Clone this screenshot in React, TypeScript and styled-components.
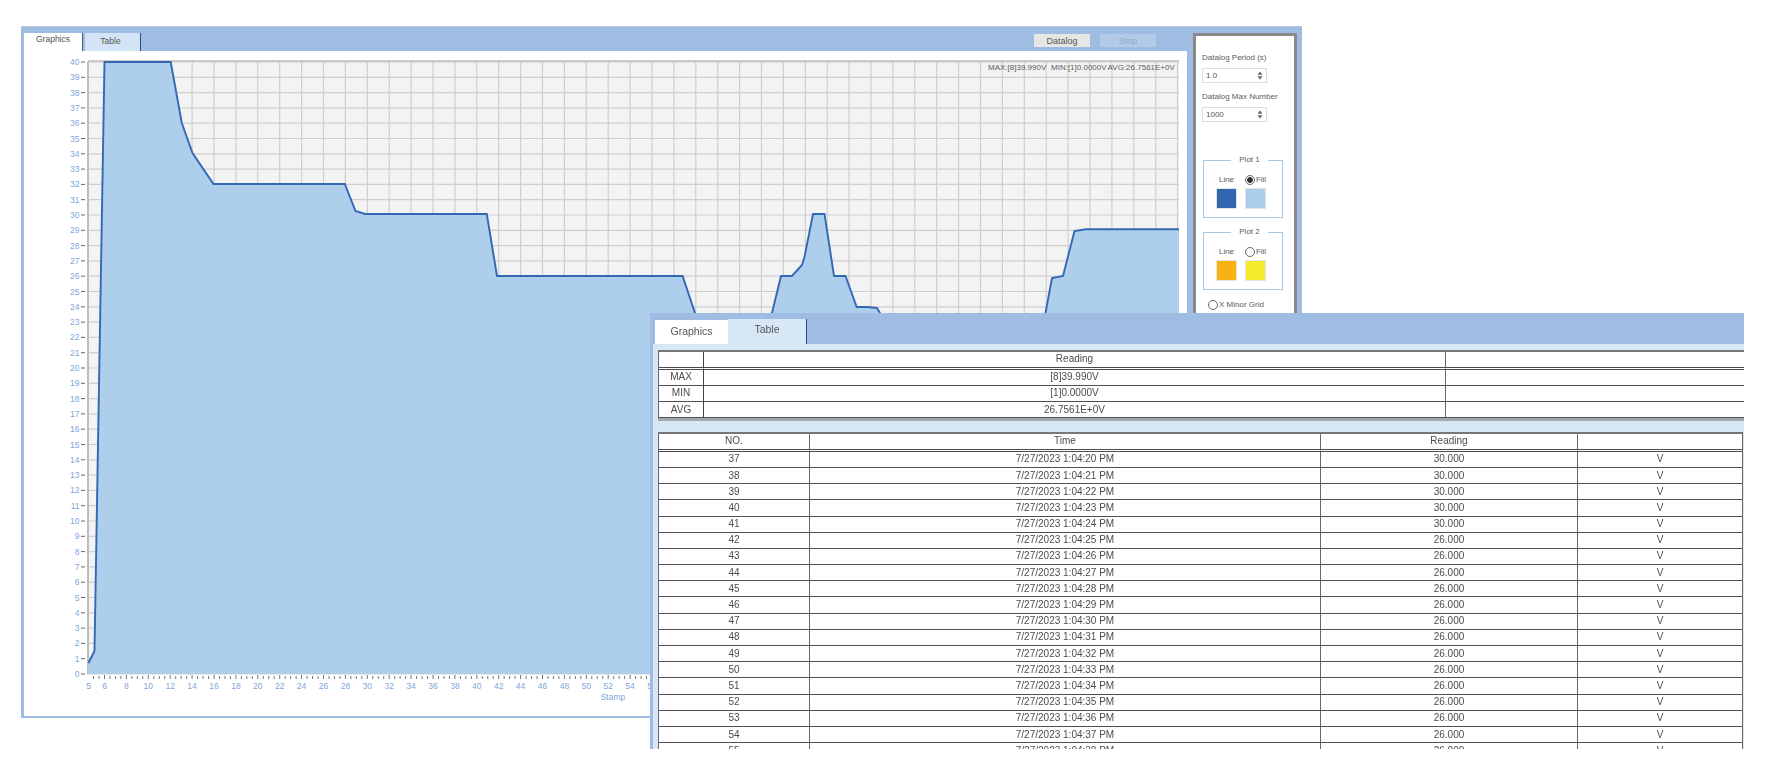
import styled, { createGlobalStyle } from 'styled-components'

const GlobalStyle = createGlobalStyle`
  html, body {
    margin: 0;
    background: #fff;
    overflow: hidden;
  }
  * {
    box-sizing: border-box;
  }
`

const Page = styled.div`
  position: relative;
  width: 1775px;
  height: 768px;
  padding: 26px 0 0 21px;
  font-family: 'Liberation Sans', Arial, sans-serif;
  filter: blur(0.55px);
`

const BackWindow = styled.div`
  width: 1281px;
  height: 692px;
  padding: 0 5px 2px 3px;
  background: #9fbce2;
  border-top: 1px solid #b9c6d6;
  display: flex;
  gap: 6px;
`

const ChartColumn = styled.div`
  width: 1163px;
  display: flex;
  flex-direction: column;
`

const TabBar = styled.div`
  height: 24px;
  padding: 6px 31px 0 0;
  display: flex;
  align-items: flex-end;
`

const Tab = styled.div<{ $active?: boolean }>`
  width: ${props => (props.$active ? '59px' : '56px')};
  height: 18px;
  margin-right: 2px;
  padding-bottom: ${props => (props.$active ? '6px' : '3px')};
  padding-right: ${props => (props.$active ? '0' : '4px')};
  display: flex;
  align-items: center;
  justify-content: center;
  font-size: 8.5px;
  color: #555;
  background: ${props => (props.$active ? '#fff' : '#d3e4f6')};
  border-right: 1px solid ${props => (props.$active ? '#4a5a78' : '#2f4a80')};
`

const ToolButton = styled.div<{ $disabled?: boolean }>`
  width: 56px;
  height: 13px;
  margin: 0 0 4px 10px;
  display: flex;
  align-items: center;
  justify-content: center;
  font-size: 9px;
  color: ${props => (props.$disabled ? '#8ea6c6' : '#555')};
  background: ${props => (props.$disabled ? '#b3cbe9' : '#e6e6e6')};
`

const Spacer = styled.div`
  flex: 1;
`

const ChartPanel = styled.div`
  flex: 1;
  background: #fff;
`

const ChartSvg = styled.svg`
  display: block;
  font-family: 'Liberation Sans', Arial, sans-serif;
`

const SidePanel = styled.div`
  width: 104px;
  height: 640px;
  margin-top: 6px;
  padding: 17px 0 0 6px;
  background: #fff;
  border: 3px solid #8b8b8b;
  border-bottom: 0;
  color: #5c5c5c;
  font-size: 8px;
`

const FieldLabel = styled.div`
  height: 10px;
  line-height: 10px;
  margin-bottom: 5px;
  white-space: nowrap;
`

const SpinBox = styled.div`
  width: 65px;
  height: 15px;
  margin-bottom: 9px;
  padding: 0 3px;
  display: flex;
  align-items: center;
  justify-content: space-between;
  border: 1px solid #dcdcdc;
  color: #555;
`

const SpinGap = styled.div`
  height: 25px;
`

const PlotGroup = styled.fieldset`
  width: 80px;
  height: 62px;
  margin: 0 0 10px 1px;
  padding: 0 0 0 13px;
  border: 1px solid #a8c6e8;
  display: block;
`

const PlotLegend = styled.legend`
  margin: 0 auto;
  padding: 0 8px;
  font-size: 8px;
  line-height: 8px;
  color: #5c5c5c;
`

const PlotGrid = styled.div`
  display: grid;
  grid-template-columns: 19px 19px;
  column-gap: 10px;
  row-gap: 4px;
  margin-top: 11px;
  justify-items: center;
`

const Option = styled.div<{ $grid?: boolean }>`
  display: flex;
  align-items: center;
  gap: 1px;
  line-height: 10px;
  margin: ${props => (props.$grid ? '5px 0 0 6px' : '0')};
  white-space: nowrap;
`

const Radio = styled.span<{ $checked?: boolean }>`
  width: 10px;
  height: 10px;
  flex: none;
  border-radius: 50%;
  border: 1px solid #666;
  background: ${props => (props.$checked ? 'radial-gradient(circle, #333 0 2.6px, #fff 3.2px)' : '#fff')};
`

const Swatch = styled.div<{ $color: string }>`
  width: 19px;
  height: 19px;
  background: ${props => props.$color};
  outline: 1px solid #e4e4e4;
`

const FrontWindow = styled.div`
  position: absolute;
  left: 650px;
  top: 313px;
  width: 1094px;
  height: 436px;
  overflow: hidden;
  background: #d8e7f6;
  border-left: 3px solid #9fbce2;
`

const FrontTabBar = styled.div`
  height: 31px;
  padding-left: 2px;
  display: flex;
  align-items: flex-end;
  background: #9fbce2;
`

const FrontTab = styled.div<{ $active?: boolean }>`
  width: ${props => (props.$active ? '79px' : '73px')};
  height: ${props => (props.$active ? '25px' : '24px')};
  padding-bottom: ${props => (props.$active ? '5px' : '2px')};
  display: flex;
  align-items: center;
  justify-content: center;
  font-size: 10.5px;
  color: #555;
  background: ${props => (props.$active ? '#d8e7f6' : '#fff')};
  border-right: ${props => (props.$active ? '1px solid #2f4a80' : '0')};
`

const TableBlock = styled.table<{ $shadow?: boolean }>`
  width: ${props => (props.$shadow ? '1088px' : '1085px')};
  margin: ${props => (props.$shadow ? '6px 0 14px 5px' : '0 0 0 5px')};
  table-layout: fixed;
  border-collapse: separate;
  border-spacing: 0;
  background: #fff;
  font-size: 10px;
  color: #4c4c4c;
  border-top: 2px solid #777;
  border-left: 1px solid #666;
  ${props => (props.$shadow ? 'box-shadow: 0 3px 0 #a5a9ae;' : 'border-right: 1px solid #666;')}
`

const Cell = styled.td<{ $head?: boolean; $wide?: boolean }>`
  height: ${props => (props.$head ? '17.6px' : '16.2px')};
  padding: 0;
  text-align: center;
  line-height: 12px;
  border-bottom: ${props => (props.$head ? '3px double #4c4c4c' : '1.5px solid #505050')};
  border-right: ${props => (props.$wide ? '1.5px solid #444' : '1px solid #666')};
  &:last-child {
    border-right: 0;
  }
`

const SpinArrows = () => (
  <svg width="6" height="9" viewBox="0 0 6 9">
    <path d="M3 0.5 L5.5 3.8 H0.5 Z M3 8.5 L5.5 5.2 H0.5 Z" fill="#666" />
  </svg>
)

// page coordinates of the trace, the part behind the table window is only a guess
const trace: [number, number][] = [
  [88.5, 663], [94.5, 651], [104.5, 62], [170.7, 62], [181.8, 123], [192.5, 153], [213.5, 184],
  [344.8, 184], [355.5, 211], [365, 214], [486.8, 214], [497, 276], [682.6, 276], [695, 313],
  [712, 340], [760, 340], [772, 313], [781, 276], [792, 276], [802, 265], [804.5, 257], [813, 214],
  [824.5, 214], [834, 276], [845.5, 276], [856.7, 307], [867, 307], [877, 308], [880, 313], [900, 340],
  [1030, 340], [1045.5, 313], [1052, 278], [1063, 276], [1074.5, 231], [1085.7, 229.3], [1179, 229.3],
]

const PLOT_LEFT = 88
const PLOT_RIGHT = 1179
const PLOT_TOP = 62
const PLOT_BOTTOM = 674
const stampX = (v: number) => 104.5 + (v - 6) * 10.95
const levelY = (v: number) => PLOT_BOTTOM - v * 15.3

const Chart = () => {
  const levels = Array.from({ length: 41 }, (_, i) => i)
  const stamps = Array.from({ length: 50 }, (_, i) => 6 + i * 2).filter(v => stampX(v) < PLOT_RIGHT)
  const minor = Array.from({ length: 120 }, (_, i) => 5 + i * 0.5).filter(v => stampX(v) < 650)
  const line = trace.map(p => p.join(',')).join(' ')
  const area = `${PLOT_LEFT},${PLOT_BOTTOM} ${line} ${PLOT_RIGHT},${PLOT_BOTTOM}`

  return (
    <ChartSvg width="1163" height="665" viewBox="24 51 1163 665">
      <rect x={PLOT_LEFT} y={PLOT_TOP} width={PLOT_RIGHT - PLOT_LEFT} height={PLOT_BOTTOM - PLOT_TOP} fill="#f3f3f3" />
      {levels.map(v => (
        <g key={v}>
          <line x1={PLOT_LEFT} x2={PLOT_RIGHT} y1={levelY(v)} y2={levelY(v)} stroke="#cfcfcf" strokeWidth="1.2" />
          <line x1="81" x2="85" y1={levelY(v)} y2={levelY(v)} stroke="#666" strokeWidth="1" />
          <text x="79.5" y={levelY(v) + 3} fontSize="8.5" textAnchor="end" fill="#7fa6da">{v}</text>
        </g>
      ))}
      {stamps.map(v => (
        <line key={v} x1={stampX(v)} x2={stampX(v)} y1={PLOT_TOP} y2={PLOT_BOTTOM} stroke="#cfcfcf" strokeWidth="1.2" />
      ))}
      <line x1={PLOT_LEFT} x2={PLOT_LEFT} y1={PLOT_TOP} y2={PLOT_BOTTOM} stroke="#bcbcbc" strokeWidth="2" />
      <line x1={PLOT_LEFT} x2={PLOT_RIGHT} y1={PLOT_TOP - 1} y2={PLOT_TOP - 1} stroke="#bcbcbc" strokeWidth="1.5" />
      <polygon points={area} fill="#aecfeb" />
      <polyline points={line} fill="none" stroke="#3368b4" strokeWidth="1.9" />
      {minor.map(v => (
        <line key={v} x1={stampX(v)} x2={stampX(v)} y1={v % 2 === 0 ? 675 : 676} y2="679" stroke="#666" strokeWidth="0.9" />
      ))}
      <text x="88.5" y="689" fontSize="8.5" textAnchor="middle" fill="#7fa6da">5</text>
      {stamps.filter(v => stampX(v) < 660).map(v => (
        <text key={v} x={stampX(v)} y="689" fontSize="8.5" textAnchor="middle" fill="#7fa6da">{v}</text>
      ))}
      <text x="613" y="700" fontSize="8.5" textAnchor="middle" fill="#7fa6da">Stamp</text>
      <text y="70" fontSize="8" fill="#5c5c5c">
        <tspan x="988">MAX:[8]39.990V</tspan>
        <tspan x="1051">MIN:[1]0.0000V</tspan>
        <tspan x="1107.6">AVG:26.7561E+0V</tspan>
      </text>
    </ChartSvg>
  )
}

const summary = [
  ['MAX', '[8]39.990V'],
  ['MIN', '[1]0.0000V'],
  ['AVG', '26.7561E+0V'],
]

const rows = Array.from({ length: 19 }, (_, i) => ({
  no: 37 + i,
  time: `7/27/2023 1:04:${20 + i} PM`,
  reading: i < 5 ? '30.000' : '26.000',
}))

export default function App() {
  return (
    <Page>
      <GlobalStyle />
      <BackWindow>
        <ChartColumn>
          <TabBar>
            <Tab $active>Graphics</Tab>
            <Tab>Table</Tab>
            <Spacer />
            <ToolButton>Datalog</ToolButton>
            <ToolButton $disabled>Stop</ToolButton>
          </TabBar>
          <ChartPanel>
            <Chart />
          </ChartPanel>
        </ChartColumn>
        <SidePanel>
          <FieldLabel>Datalog Period (s)</FieldLabel>
          <SpinBox>1.0<SpinArrows /></SpinBox>
          <FieldLabel>Datalog Max Number</FieldLabel>
          <SpinBox>1000<SpinArrows /></SpinBox>
          <SpinGap />
          <PlotGroup>
            <PlotLegend>Plot 1</PlotLegend>
            <PlotGrid>
              <Option>Line</Option>
              <Option><Radio $checked />Fill</Option>
              <Swatch $color="#3366b0" />
              <Swatch $color="#a9cdeb" />
            </PlotGrid>
          </PlotGroup>
          <PlotGroup>
            <PlotLegend>Plot 2</PlotLegend>
            <PlotGrid>
              <Option>Line</Option>
              <Option><Radio />Fill</Option>
              <Swatch $color="#f9b213" />
              <Swatch $color="#f6ea2c" />
            </PlotGrid>
          </PlotGroup>
          <Option $grid><Radio />X Minor Grid</Option>
        </SidePanel>
      </BackWindow>

      <FrontWindow>
        <FrontTabBar>
          <FrontTab>Graphics</FrontTab>
          <FrontTab $active>Table</FrontTab>
        </FrontTabBar>
        <TableBlock $shadow>
          <colgroup>
            <col style={{ width: 45 }} />
            <col style={{ width: 742 }} />
            <col />
          </colgroup>
          <tbody>
            <tr>
              <Cell $head $wide />
              <Cell $head>Reading</Cell>
              <Cell $head />
            </tr>
            {summary.map(([name, value]) => (
              <tr key={name}>
                <Cell $wide>{name}</Cell>
                <Cell>{value}</Cell>
                <Cell />
              </tr>
            ))}
          </tbody>
        </TableBlock>
        <TableBlock>
          <colgroup>
            <col style={{ width: 151 }} />
            <col style={{ width: 511 }} />
            <col style={{ width: 257 }} />
            <col />
          </colgroup>
          <thead>
            <tr>
              <Cell $head>NO.</Cell>
              <Cell $head>Time</Cell>
              <Cell $head>Reading</Cell>
              <Cell $head />
            </tr>
          </thead>
          <tbody>
            {rows.map(row => (
              <tr key={row.no}>
                <Cell>{row.no}</Cell>
                <Cell>{row.time}</Cell>
                <Cell>{row.reading}</Cell>
                <Cell>V</Cell>
              </tr>
            ))}
          </tbody>
        </TableBlock>
      </FrontWindow>
    </Page>
  )
}
